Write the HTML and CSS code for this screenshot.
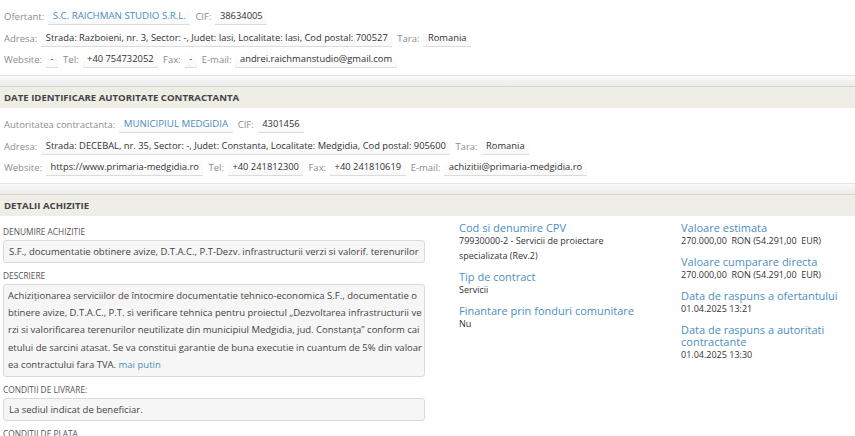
FILE: index.html
```html
<!DOCTYPE html>
<html>
<head>
<meta charset="utf-8">
<link rel="stylesheet" href="styles.css">
</head>
<body>
<div class="info">
  <div class="row"><span class="lbl">Ofertant:</span><span class="val link">S.C. RAICHMAN STUDIO S.R.L.</span><span class="lbl">CIF:</span><span class="val">38634005</span></div>
  <div class="row"><span class="lbl">Adresa:</span><span class="val">Strada: Razboieni, nr. 3, Sector: -, Judet: Iasi, Localitate: Iasi, Cod postal: 700527</span><span class="lbl">Tara:</span><span class="val">Romania</span></div>
  <div class="row"><span class="lbl">Website:</span><span class="val">-</span><span class="lbl">Tel:</span><span class="val">+40 754732052</span><span class="lbl">Fax:</span><span class="val">-</span><span class="lbl">E-mail:</span><span class="val">andrei.raichmanstudio@gmail.com</span></div>
</div>
<div class="sep"></div>
<div class="head">DATE IDENTIFICARE AUTORITATE CONTRACTANTA</div>
<div class="info">
  <div class="row"><span class="lbl">Autoritatea contractanta:</span><span class="val link">MUNICIPIUL MEDGIDIA</span><span class="lbl">CIF:</span><span class="val">4301456</span></div>
  <div class="row"><span class="lbl">Adresa:</span><span class="val">Strada: DECEBAL, nr. 35, Sector: -, Judet: Constanta, Localitate: Medgidia, Cod postal: 905600</span><span class="lbl">Tara:</span><span class="val">Romania</span></div>
  <div class="row"><span class="lbl">Website:</span><span class="val">https://www.primaria-medgidia.ro</span><span class="lbl">Tel:</span><span class="val">+40 241812300</span><span class="lbl">Fax:</span><span class="val">+40 241810619</span><span class="lbl">E-mail:</span><span class="val">achizitii@primaria-medgidia.ro</span></div>
</div>
<div class="sep"></div>
<div class="head">DETALII ACHIZITIE</div>
<div class="details">
  <div class="left">
    <div class="flbl">DENUMIRE ACHIZITIE</div>
    <div class="box">S.F., documentatie obtinere avize, D.T.A.C., P.T-Dezv. infrastructurii verzi si valorif. terenurilor</div>
    <div class="flbl">DESCRIERE</div>
    <div class="box desc">Achiziționarea serviciilor de întocmire documentatie tehnico-economica S.F., documentatie o<br>btinere avize, D.T.A.C., P.T. si verificare tehnica pentru proiectul „Dezvoltarea infrastructurii ve<br>rzi si valorificarea terenurilor neutilizate din municipiul Medgidia, jud. Constanța” conform cai<br>etului de sarcini atasat. Se va constitui garantie de buna executie in cuantum de 5% din valoar<br>ea contractului fara TVA. <span class="more">mai putin</span></div>
    <div class="flbl">CONDITII DE LIVRARE:</div>
    <div class="box">La sediul indicat de beneficiar.</div>
    <div class="flbl">CONDITII DE PLATA</div>
  </div>
  <div class="col mid">
    <div class="grp"><div class="h">Cod si denumire CPV</div><div class="v">79930000-2 - Servicii de proiectare specializata (Rev.2)</div></div>
    <div class="grp"><div class="h">Tip de contract</div><div class="v">Servicii</div></div>
    <div class="grp"><div class="h">Finantare prin fonduri comunitare</div><div class="v">Nu</div></div>
  </div>
  <div class="col right">
    <div class="grp"><div class="h">Valoare estimata</div><div class="v">270.000,00 &nbsp;RON (54.291,00 &nbsp;EUR)</div></div>
    <div class="grp"><div class="h">Valoare cumparare directa</div><div class="v">270.000,00 &nbsp;RON (54.291,00 &nbsp;EUR)</div></div>
    <div class="grp"><div class="h">Data de raspuns a ofertantului</div><div class="v">01.04.2025 13:21</div></div>
    <div class="grp"><div class="h">Data de raspuns a autoritati contractante</div><div class="v">01.04.2025 13:30</div></div>
  </div>
</div>
</body>
</html>
```
FILE: styles.css
```css
html, body {
  margin: 0;
  padding: 0;
  background: #fff;
  font-family: "Open Sans", "Noto Sans", sans-serif;
  color: #333;
  overflow: hidden;
}
.info {
  padding: 6px 4px 4.5px;
}
.row {
  display: flex;
  align-items: center;
  height: 21.5px;
  font-size: 9.5px;
  white-space: nowrap;
}
.lbl {
  color: #8c8c8c;
  margin-right: 4px;
}
.val {
  color: #333;
  font-size: 9.35px;
  padding: 1px 4.5px 2px;
  border-bottom: 1px solid #dcdcdc;
  margin-right: 5px;
  background: linear-gradient(#fff, #f9f9f9);
}
.val.link {
  color: #4a8fc2;
  font-size: 9.7px;
}
.sep {
  height: 10px;
  border-top: 1px solid #e6e6e6;
  border-bottom: 1px solid #d6d6d6;
  background: linear-gradient(#f9f9f9, #ececec);
}
.head {
  height: 21px;
  line-height: 21px;
  background: #eeede6;
  padding-left: 4px;
  font-size: 9.6px;
  font-weight: 700;
  color: #444;
}
.details {
  display: flex;
  padding: 3px 0 0 3px;
}
.left {
  width: 422px;
  flex: none;
}
.flbl {
  font-size: 8.3px;
  color: #555;
  line-height: 12px;
  margin-top: 7px;
  margin-bottom: 2px;
}
.box {
  background: #f6f6f6;
  border: 1px solid #dadada;
  border-radius: 3px;
  padding: 4px 5px;
  font-size: 9.5px;
  line-height: 13px;
  color: #444;
}
.box.desc {
  font-size: 9.5px;
  line-height: 17.2px;
  padding: 2px 4px 3px;
  white-space: nowrap;
}
.more {
  color: #4a8fc2;
}
.col {
  flex: none;
  padding-top: 3px;
}
.mid {
  margin-left: 34px;
  width: 188px;
}
.right {
  margin-left: 34px;
  width: 172px;
}
.grp {
  margin-bottom: 7.5px;
}
.h {
  font-size: 11px;
  line-height: 12px;
  color: #4a8fc2;
}
.v {
  font-size: 9px;
  line-height: 14.5px;
  color: #333;
}
```
